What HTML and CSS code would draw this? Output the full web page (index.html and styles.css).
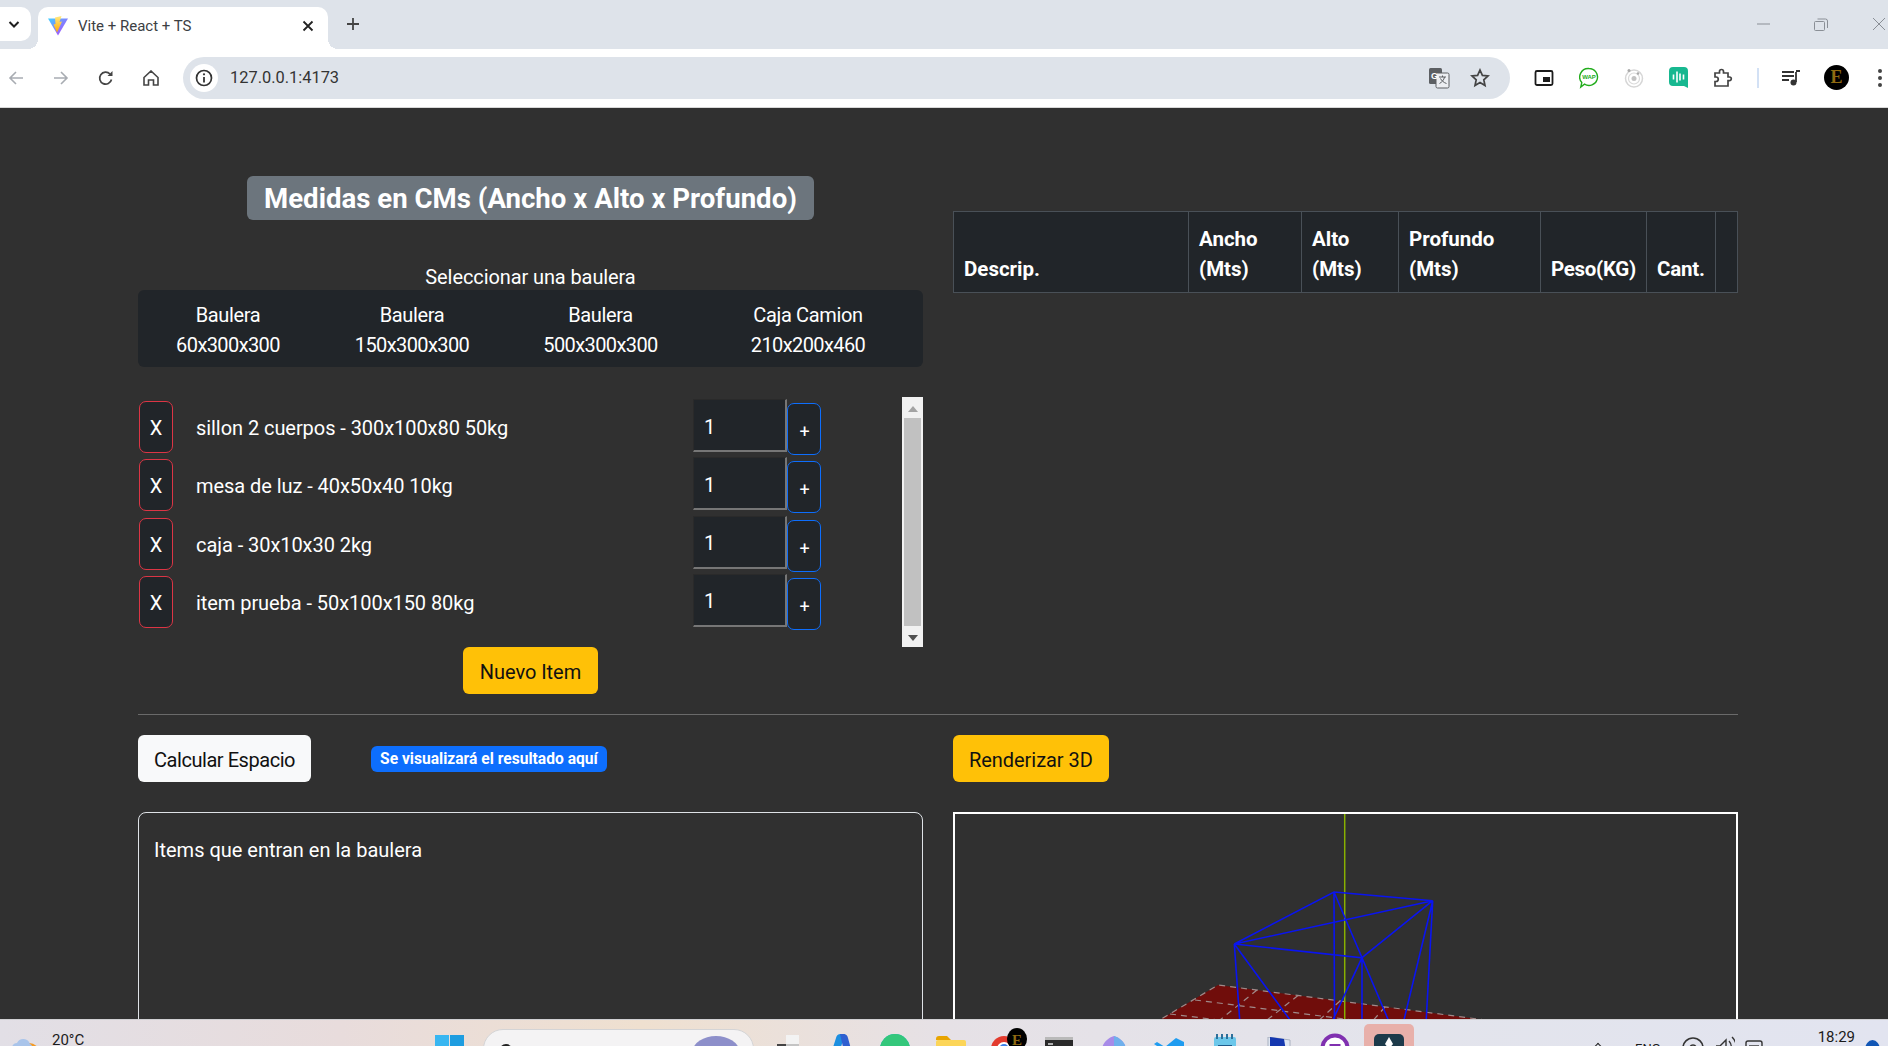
FILE: index.html
```html
<!DOCTYPE html>
<html lang="es">
<head>
  <meta charset="UTF-8">
  <title>Vite + React + TS</title>
  <link rel="stylesheet" href="styles.css">
</head>
<body>
  <div class="tabstrip">
    <div class="tab-menu">
      <svg width="14" height="14" viewBox="0 0 14 14"><path d="M2.500 5l4.500 4.500L11.500 5" fill="none" stroke="#1f1f1f" stroke-width="2"/></svg>
    </div>
    <div class="tab">
      <svg class="favicon" width="22" height="22" viewBox="0 0 22 22">
        <defs>
          <linearGradient id="viteBlue" x1="0" y1="0" x2="1" y2="1"><stop offset="0" stop-color="#41d1ff"/><stop offset="1" stop-color="#bd34fe"/></linearGradient>
          <linearGradient id="viteBolt" x1="0" y1="0" x2="0" y2="1"><stop offset="0" stop-color="#ffea83"/><stop offset="1" stop-color="#ffa800"/></linearGradient>
        </defs>
        <path d="M1 3.500L21 3.500 11 20.500z" fill="url(#viteBlue)"/>
        <path d="M14.500 1L8 2.500 8.500 9 6.500 9.500 10 17.500 15 6.500 12.500 7z" fill="url(#viteBolt)"/>
      </svg>
      <span class="tab-title">Vite + React + TS</span>
      <svg class="tab-close" width="12" height="12" viewBox="0 0 12 12"><path d="M1.500 1.500l9 9M10.500 1.500l-9 9" stroke="#222" stroke-width="1.800"/></svg>
    </div>
    <svg class="new-tab" width="14" height="14" viewBox="0 0 14 14"><path d="M7 1v12M1 7h12" stroke="#444" stroke-width="1.800"/></svg>
    <div class="window-controls">
      <svg width="14" height="14" viewBox="0 0 14 14"><path d="M1 7h13" stroke="#8a8f96" stroke-width="1"/></svg>
      <svg width="14" height="14" viewBox="0 0 14 14"><path d="M1.500 4.500h8a1 1 0 0 1 1 1v7a1 1 0 0 1-1 1h-8a1 1 0 0 1-1-1v-7a1 1 0 0 1 1-1zM3.500 2h8a2 2 0 0 1 2 2v7" fill="none" stroke="#8a8f96"/></svg>
      <svg width="14" height="14" viewBox="0 0 14 14"><path d="M1 1l12 12M13 1L1 13" stroke="#8a8f96"/></svg>
    </div>
  </div>

  <div class="toolbar">
    <div class="nav-icons">
      <svg width="16" height="16" viewBox="0 0 16 16"><path d="M15 8H2M8 2L2 8l6 6" fill="none" stroke="#a8acb2" stroke-width="1.600"/></svg>
      <svg width="16" height="16" viewBox="0 0 16 16"><path d="M1 8h13M8 2l6 6-6 6" fill="none" stroke="#a8acb2" stroke-width="1.600"/></svg>
      <svg width="16" height="16" viewBox="0 0 16 16"><path d="M13.500 9.500A6 6 0 1 1 12 4" fill="none" stroke="#444" stroke-width="1.700"/><path d="M14.500 1v5h-5z" fill="#444"/></svg>
      <svg width="16" height="16" viewBox="0 0 16 16"><path d="M1 7.500L8 1l7 6.500V15h-4.500v-5h-5v5H1z" fill="none" stroke="#444" stroke-width="1.600"/></svg>
    </div>
    <div class="omnibox">
      <span class="info-chip">
        <svg width="18" height="18" viewBox="0 0 18 18"><circle cx="9" cy="9" r="7.500" fill="none" stroke="#333" stroke-width="1.700"/><path d="M9 8v5.500" stroke="#333" stroke-width="1.800"/><circle cx="9" cy="5.300" r="1.100" fill="#333"/></svg>
      </span>
      <span class="url">127.0.0.1:4173</span>
      <svg class="omni-translate" width="22" height="22" viewBox="0 0 22 22">
        <rect x="1" y="1" width="13" height="16" rx="1.500" fill="#5c5f63"/>
        <rect x="8" y="6" width="13" height="15" rx="1.500" fill="#eceef2" stroke="#5c5f63"/>
        <text x="3" y="12" class="translate-g">G</text>
        <path d="M11 10h7M14.500 8.500V10M16.500 10c-.5 3-2.500 5-5 6.500M12.500 11.500c1 2 3 4 6 5" fill="none" stroke="#5c5f63"/>
      </svg>
      <svg class="omni-star" width="20" height="20" viewBox="0 0 20 20"><path d="M10 2l2.400 5.400 5.600.6-4.200 3.800 1.200 5.700L10 14.600 5 17.500l1.200-5.700L2 8l5.600-.6z" fill="none" stroke="#444" stroke-width="1.700"/></svg>
    </div>
    <div class="ext-icons">
      <svg width="20" height="18" viewBox="0 0 20 18"><rect x="1.500" y="2" width="17" height="14" rx="1.500" fill="none" stroke="#1c1c1c" stroke-width="1.800"/><rect x="9" y="8" width="7" height="5" fill="#1c1c1c"/></svg>
      <svg width="20" height="22" viewBox="0 0 20 22"><path d="M10 1.500a8.500 8.500 0 1 1-4.500 15.700L1.800 20l1-4.500A8.500 8.500 0 0 1 10 1.500z" fill="#fff" stroke="#22ac1c" stroke-width="1.400"/><text x="10" y="12" class="wap-text">WAP</text></svg>
      <svg width="20" height="20" viewBox="0 0 20 20"><circle cx="10" cy="10.500" r="8.500" fill="none" stroke="#d6d6d6" stroke-width="1.500"/><circle cx="10" cy="10.500" r="5.500" fill="none" stroke="#dadada" stroke-width="1.200"/><circle cx="10" cy="10.500" r="2.500" fill="#c2c2c2"/><circle cx="5" cy="2.500" r="1.500" fill="#a9a9a9"/><circle cx="14" cy="5.500" r="1.300" fill="#a9a9a9"/></svg>
      <svg width="19" height="21" viewBox="0 0 19 21"><path d="M4 0h11a4 4 0 0 1 4 4v17l-4-2H4a4 4 0 0 1-4-4V4a4 4 0 0 1 4-4z" fill="#17b890"/><path d="M4.500 7.500v5M8 4.500v11M11 6.500v7M14.500 7.500v5" stroke="#fff" stroke-width="1.600"/></svg>
      <svg width="20" height="20" viewBox="0 0 20 20"><path d="M2 5h4.500V3.500a2 2 0 0 1 4 0V5H15v4h1.500a1.800 1.800 0 0 1 0 3.600H15V18H2v-4.500h1a2.200 2.200 0 0 0 0-4.500H2z" fill="none" stroke="#444" stroke-width="1.700"/></svg>
      <span class="ext-divider"></span>
      <svg class="icon-music" width="20" height="18" viewBox="0 0 20 18"><path d="M1 3h12M1 7h12M1 11h7" stroke="#333" stroke-width="1.800"/><path d="M15 3v10" stroke="#333" stroke-width="1.800"/><path d="M15 2h4" stroke="#333" stroke-width="2"/><circle cx="12.500" cy="13.500" r="3" fill="#333"/></svg>
      <span class="avatar">E</span>
      <svg class="icon-dots" width="6" height="20" viewBox="0 0 6 20"><circle cx="3" cy="3" r="2" fill="#444"/><circle cx="3" cy="10" r="2" fill="#444"/><circle cx="3" cy="17" r="2" fill="#444"/></svg>
    </div>
  </div>

  <main class="page">
    <div class="top-row">
      <section class="left-col">
        <div class="title-wrap"><h1 class="title-badge">Medidas en CMs (Ancho x Alto x Profundo)</h1></div>
        <p class="select-label">Seleccionar una baulera</p>
        <div class="baulera-table">
          <div class="baulera">Baulera<br><span class="dim">60x300x300</span></div>
          <div class="baulera">Baulera<br><span class="dim">150x300x300</span></div>
          <div class="baulera">Baulera<br><span class="dim">500x300x300</span></div>
          <div class="baulera">Caja Camion<br><span class="dim">210x200x460</span></div>
        </div>

        <div class="items-box">
          <div class="items-list">
            <div class="item-row">
              <button class="btn-remove">X</button>
              <span class="item-label">sillon 2 cuerpos - 300x100x80 50kg</span>
              <input class="qty" type="text" value="1">
              <button class="btn-add">+</button>
            </div>
            <div class="item-row">
              <button class="btn-remove">X</button>
              <span class="item-label">mesa de luz - 40x50x40 10kg</span>
              <input class="qty" type="text" value="1">
              <button class="btn-add">+</button>
            </div>
            <div class="item-row">
              <button class="btn-remove">X</button>
              <span class="item-label">caja - 30x10x30 2kg</span>
              <input class="qty" type="text" value="1">
              <button class="btn-add">+</button>
            </div>
            <div class="item-row">
              <button class="btn-remove">X</button>
              <span class="item-label">item prueba - 50x100x150 80kg</span>
              <input class="qty" type="text" value="1">
              <button class="btn-add">+</button>
            </div>
          </div>
          <div class="scrollbar">
            <span class="arrow-up"></span>
            <span class="thumb"></span>
            <span class="arrow-down"></span>
          </div>
        </div>
        <div class="new-item"><button class="btn-yellow btn-new">Nuevo Item</button></div>
      </section>

      <section class="right-col">
        <table class="items-table">
          <colgroup>
            <col class="c1"><col class="c2"><col class="c3"><col class="c4"><col class="c5"><col class="c6"><col class="c7">
          </colgroup>
          <thead>
            <tr>
              <th>Descrip.</th>
              <th>Ancho (Mts)</th>
              <th>Alto (Mts)</th>
              <th>Profundo (Mts)</th>
              <th class="th-peso">Peso(KG)</th>
              <th class="th-cant">Cant.</th>
              <th></th>
            </tr>
          </thead>
        </table>
      </section>
    </div>

    <hr class="divider">

    <div class="bottom-row">
      <section class="left-col">
        <div class="actions">
          <button class="btn-light">Calcular Espacio</button>
          <span class="result-badge">Se visualizará el resultado aquí</span>
        </div>
        <div class="result-box">Items que entran en la baulera</div>
      </section>
      <section class="right-col">
        <div class="actions">
          <button class="btn-yellow">Renderizar 3D</button>
        </div>
        <div class="canvas-box">
          <svg class="scene" width="781" height="240" viewBox="955 814 781 240">
            <path class="floor" d="M1153 1024L1218 985 1516 1024z"/>
            <path class="grid" d="M1153 1024L1218 985 1516 1024M1195 1000L1400 1026M1170 1014L1300 1030M1257 990L1215 1024M1298 995.500L1262 1024M1340 1001L1315 1024M1385 1007L1370 1024"/>
            <path class="axis" d="M1344.700 814V1024"/>
            <path class="wire" d="M1334 892L1432.700 900.700 1234.300 944 1334 892 1362 957.700 1234.300 944M1432.700 900.700L1362 957.700M1234.300 944L1240 1024M1234.300 944L1293 1024M1334 892L1334.500 1024M1362 957.700V1024M1362 957.700L1331 1024M1362 957.700L1390 1024M1432.700 900.700L1426 1024M1432.700 900.700L1403 1024"/>
          </svg>
        </div>
      </section>
    </div>
  </main>

  <footer class="taskbar">
    <div class="weather">
      <svg width="30" height="27" viewBox="0 0 30 27"><circle cx="18" cy="21" r="11" fill="#f59a23"/><path d="M3 19a5 5 0 0 1 3-9 7 7 0 0 1 13 1 4.500 4.500 0 0 1 0 8z" fill="#a9c4ea"/></svg>
      <span class="temp">20°C</span>
    </div>
    <div class="task-center">
      <svg class="icon-win" width="29" height="27" viewBox="0 0 29 27"><rect width="14" height="14" fill="#38b6f1"/><rect x="15" width="14" height="14" fill="#1e9de0"/><rect y="15" width="14" height="14" fill="#1e9de0"/><rect x="15" y="15" width="14" height="14" fill="#0a84d0"/></svg>
      <div class="search-box">
        <svg width="18" height="18" viewBox="0 0 18 18"><circle cx="8" cy="8" r="6" fill="none" stroke="#222" stroke-width="1.800"/></svg>
        <span class="search-text">Search</span>
        <span class="search-art"></span>
      </div>
      <svg class="icon-widgets" width="22" height="22" viewBox="0 0 22 22"><rect x="9" width="13" height="13" fill="#f3f3f3"/><rect y="9" width="13" height="13" fill="#444"/><rect x="9" y="9" width="13" height="13" fill="#c4c4c4"/></svg>
      <svg class="icon-copilot" width="30" height="26" viewBox="0 0 30 26"><path d="M3 26L10 4a5 5 0 0 1 5-4h4l-8 26z" fill="#1c8fe0"/><path d="M14 0h3a5 5 0 0 1 5 4l6 22h-8z" fill="#2f5fd0"/><circle cx="23" cy="24" r="6" fill="#b05ad8"/></svg>
      <svg class="icon-edge" width="30" height="26" viewBox="0 0 30 26"><circle cx="15" cy="15" r="15" fill="#1fb4c9"/><path d="M0 15a15 15 0 0 1 30 0z" fill="#34c77b"/><circle cx="13" cy="21" r="7" fill="#1070c8"/></svg>
      <svg class="icon-folder" width="30" height="22" viewBox="0 0 30 22"><path d="M0 3a3 3 0 0 1 3-3h8l4 4H0z" fill="#e8a400"/><rect y="4" width="30" height="20" rx="2" fill="#fcd558"/></svg>
      <svg class="icon-chrome" width="36" height="30" viewBox="0 0 36 30"><circle cx="13" cy="21" r="13" fill="#e33b2e"/><path d="M13 21L0 21a13 13 0 0 0 13 13z" fill="#33a852"/><circle cx="13" cy="21" r="6" fill="#3d7fe8" stroke="#fff" stroke-width="2"/><ellipse cx="26" cy="11" rx="10" ry="11" fill="#000"/><text x="26" y="17" class="chrome-e">E</text></svg>
      <svg class="icon-term" width="28" height="20" viewBox="0 0 28 20"><rect width="28" height="20" fill="#2a2a2a"/><rect width="28" height="3" fill="#b9b9b9"/><path d="M3 7h5M3 10h3M10 11h8" stroke="#ddd" stroke-width="1.500"/></svg>
      <svg class="icon-m365" width="28" height="24" viewBox="0 0 28 24"><path d="M14 0C7 2 2 8 2 14v10h24V14C26 8 21 2 14 0z" fill="#a78be8"/><path d="M14 0c7 2 12 8 12 14v10H14z" fill="#6fb0ec"/></svg>
      <svg class="icon-vscode" width="30" height="24" viewBox="0 0 30 24"><path d="M22 0l8 4v20h-8V8L9 20l-7-4 7-4-9-6 3-2 8 5z" fill="#1f9cf0"/></svg>
      <svg class="icon-note" width="22" height="26" viewBox="0 0 22 26"><rect y="3" width="22" height="23" rx="2" fill="#6cc7ea"/><path d="M3 0v5M8 0v5M13 0v5M18 0v5" stroke="#2d6f9a" stroke-width="2"/><rect x="4" y="11" width="14" height="3" fill="#1e5a8a"/></svg>
      <svg class="icon-paper" width="26" height="20" viewBox="0 0 26 20"><path d="M2 0l22 3v17H2z" fill="#dfe6f3" stroke="#a9b1c0"/><path d="M4 0l14 2 3 18H4z" fill="#1538b0"/></svg>
      <svg class="icon-purple" width="30" height="24" viewBox="0 0 30 24"><circle cx="15" cy="15" r="12.500" fill="#fff" stroke="#8030b0" stroke-width="4"/><rect x="9.500" y="11" width="11" height="8" fill="#8030b0"/></svg>
      <div class="task-active">
        <svg width="30" height="22" viewBox="0 0 30 22"><rect width="30" height="28" rx="5" fill="#1d3a4a"/><path d="M15 3l4 7-4 5-4-5z" fill="#fff"/><path d="M18 12l5 8h-8z" fill="#3fc9a5"/></svg>
      </div>
    </div>
    <div class="tray">
      <span class="tray-caret"></span>
      <span class="tray-lang">ENG</span>
      <svg width="24" height="24" viewBox="0 0 24 24"><circle cx="12" cy="14" r="10" fill="none" stroke="#333" stroke-width="1.600"/><circle cx="12" cy="14" r="3" fill="none" stroke="#333" stroke-width="1.400"/></svg>
      <svg width="20" height="24" viewBox="0 0 20 24"><path d="M1 12h4l6-6v18" fill="none" stroke="#333" stroke-width="1.400"/><path d="M14 7a9 9 0 0 1 0 12M17 3a14 14 0 0 1 0 20" fill="none" stroke="#333" stroke-width="1.300"/></svg>
      <svg width="18" height="24" viewBox="0 0 18 24"><rect x="1" y="7" width="16" height="16" rx="2" fill="none" stroke="#333" stroke-width="1.400"/><path d="M4 12h10" stroke="#333" stroke-width="1.400"/></svg>
      <span class="clock">18:29</span>
      <span class="tray-dot"></span>
    </div>
  </footer>
</body>
</html>
```

FILE: styles.css
```css
* {
  box-sizing: border-box;
}
html, body {
  margin: 0;
  height: 1046px;
  overflow: hidden;
}
body {
  display: flex;
  flex-direction: column;
  font-family: Roboto, "Open Sans", Arial, sans-serif;
  font-size: 20px;
  line-height: 30px;
  color: #fff;
  background-color: #303030;
}
svg {
  display: block;
  flex: none;
}

/* browser tabs */
.tabstrip {
  flex: none;
  display: flex;
  align-items: flex-start;
  height: 49px;
  background-color: #dee3ea;
}
.tab-menu {
  width: 31px;
  height: 34px;
  margin-top: 7px;
  padding: 10px 7px;
  background-color: #fff;
  border-radius: 0 10px 10px 0;
}
.tab {
  position: relative;
  display: flex;
  align-items: center;
  width: 290px;
  height: 42px;
  margin: 7px 0 0 7px;
  padding: 0 14px 4px 9px;
  background-color: #fff;
  border-radius: 10px 10px 0 0;
}
.tab::after {
  content: "";
  position: absolute;
  right: -10px;
  bottom: 0;
  width: 10px;
  height: 10px;
  background: radial-gradient(circle at 100% 0, transparent 10px, #fff 10px);
}
.tab::before {
  content: "";
  position: absolute;
  left: -10px;
  bottom: 0;
  width: 10px;
  height: 10px;
  background: radial-gradient(circle at 0 0, transparent 10px, #fff 10px);
}
.favicon {
  margin-right: 9px;
}
.tab-title {
  flex: 1;
  font-size: 15px;
  line-height: 20px;
  color: #3c4043;
}
.new-tab {
  margin: 17px 0 0 18px;
}
.window-controls {
  display: flex;
  gap: 44px;
  margin: 17px 2px 0 auto;
}

/* browser toolbar */
.toolbar {
  flex: none;
  display: flex;
  align-items: center;
  height: 59px;
  padding: 0 5px 1px 8px;
  background-color: #fff;
  border-bottom: 1px solid #d8d8d8;
}
.nav-icons {
  display: flex;
  gap: 29px;
}
.omnibox {
  display: flex;
  align-items: center;
  width: 1327px;
  height: 42px;
  margin-left: 24px;
  padding: 0 20px 0 7px;
  background-color: #dee3ea;
  border-radius: 21px;
}
.info-chip {
  display: flex;
  align-items: center;
  justify-content: center;
  width: 28px;
  height: 28px;
  background-color: #fff;
  border-radius: 50%;
}
.url {
  flex: 1;
  margin-left: 12px;
  padding-top: 1px;
  font-size: 16.400px;
  color: #333;
}
.omni-star {
  margin-left: 20px;
}
.translate-g {
  font-family: "Liberation Sans", Arial, sans-serif;
  font-size: 9px;
  font-weight: bold;
  fill: #fff;
}
.wap-text {
  font-family: "Liberation Sans", Arial, sans-serif;
  font-size: 6px;
  font-weight: bold;
  text-anchor: middle;
  fill: #22ac1c;
}
.ext-icons {
  display: flex;
  align-items: center;
  gap: 25px;
  margin-left: 24px;
}
.ext-divider {
  width: 2px;
  height: 20px;
  margin-left: -1px;
  background-color: #d3e1f5;
}
.icon-music {
  margin-left: -3px;
}
.avatar {
  width: 25px;
  height: 25px;
  margin-left: -2px;
  font-family: "Liberation Serif", serif;
  font-size: 18px;
  font-weight: bold;
  line-height: 25px;
  text-align: center;
  color: #8f6a12;
  background-color: #000;
  border-radius: 50%;
}
.icon-dots {
  margin-left: 3px;
}

/* page */
.page {
  flex: 1;
  min-height: 0;
  overflow: hidden;
  padding: 0 150px 0 138px;
  background-color: #303030;
}
.top-row, .bottom-row {
  display: grid;
  grid-template-columns: 785px 785px;
  gap: 30px;
}
.title-wrap {
  margin-top: 68px;
  text-align: center;
}
.title-badge {
  display: inline-block;
  margin: 0;
  padding: 1px 17px 0;
  height: 44px;
  font-size: 27.600px;
  font-weight: 700;
  line-height: 44px;
  background-color: #6c757d;
  border-radius: 6px;
}
.select-label {
  margin: 41px 0 0;
  height: 29px;
  padding-top: 1px;
  text-align: center;
  letter-spacing: -.1px;
}
.baulera-table {
  display: grid;
  grid-template-columns: 180px 188px 189px 226px;
  height: 77px;
  padding-top: 10px;
  text-align: center;
  letter-spacing: -.34px;
  background-color: #212529;
  border-radius: 6px;
}
.dim {
  letter-spacing: -.6px;
}
.items-box {
  display: flex;
  height: 250px;
  margin-top: 30px;
}
.items-list {
  flex: 1;
  display: flex;
  flex-direction: column;
  gap: 6.330px;
  padding: 4px 81px 0 1px;
}
.item-row {
  display: flex;
  align-items: flex-start;
  height: 52px;
}
.btn-remove {
  width: 34px;
  height: 52px;
  padding: 2px 0 0;
  font: inherit;
  color: #fff;
  background-color: #212529;
  border: 1px solid #dc3545;
  border-radius: 7px;
}
.item-label {
  flex: 1;
  margin-left: 23px;
  line-height: 55px;
  letter-spacing: -.06px;
}
.qty {
  width: 94px;
  height: 53px;
  margin-top: -2px;
  padding: 3px 10px 0;
  font: inherit;
  color: #fff;
  background-color: #212529;
  border-style: solid;
  border-width: 1px 2px 2px 1px;
  border-color: #2a2a2a #767676 #767676 #2a2a2a;
  outline: none;
}
.btn-add {
  width: 34px;
  height: 52px;
  margin-top: 2px;
  padding: 6px 0 0 1px;
  font: inherit;
  font-size: 18px;
  color: #fff;
  background-color: #212529;
  border: 1px solid #0d6efd;
  border-radius: 7px;
}
.scrollbar {
  display: flex;
  flex-direction: column;
  align-items: center;
  width: 21px;
  padding: 9px 0 6px;
  background-color: #f1f1f1;
}
.thumb {
  flex: 1;
  width: 17px;
  margin: 6px 0 9px;
  background-color: #c1c1c1;
}
.arrow-up {
  border: 5px solid transparent;
  border-top: 0;
  border-bottom: 6px solid #a3a3a3;
}
.arrow-down {
  border: 5px solid transparent;
  border-bottom: 0;
  border-top: 6px solid #505050;
}
.new-item {
  text-align: center;
}
.btn-yellow, .btn-light {
  height: 47px;
  padding: 2px 16px 0;
  font: inherit;
  border: none;
  border-radius: 6px;
}
.btn-yellow {
  color: #111;
  background-color: #ffc107;
  letter-spacing: -.05px;
}
.btn-new {
  padding: 2px 17px 0;
}
.btn-light {
  color: #111;
  background-color: #f8f9fa;
  letter-spacing: -.45px;
}
.items-table {
  width: 784px;
  margin-top: 103px;
  table-layout: fixed;
  border-collapse: collapse;
  background-color: #212529;
}
.items-table th {
  height: 81px;
  padding: 8px 10px;
  font-size: 20.500px;
  font-weight: 700;
  text-align: left;
  vertical-align: bottom;
  border: 1px solid #495057;
}
.items-table .th-peso {
  letter-spacing: -.3px;
}
.items-table .th-cant {
  letter-spacing: -.2px;
}
.c1 { width: 235px; }
.c2 { width: 113px; }
.c3 { width: 97px; }
.c4 { width: 142px; }
.c5 { width: 106px; }
.c6 { width: 69px; }
.c7 { width: 22px; }
.divider {
  height: 1px;
  margin: 20px 0;
  background-color: #6a6a6a;
  border: none;
}
.actions {
  display: flex;
  align-items: center;
  gap: 60px;
}
.result-badge {
  height: 26px;
  padding: 0 9px;
  font-size: 15.600px;
  font-weight: 700;
  line-height: 26px;
  background-color: #0d6efd;
  border-radius: 6px;
}
.result-box {
  height: 300px;
  margin-top: 30px;
  padding: 22px 15px;
  border: 1px solid #dee2e6;
  border-radius: 8px;
}
.canvas-box {
  height: 300px;
  margin-top: 30px;
  border: 2px solid #fff;
  overflow: hidden;
}
.floor {
  fill: #700d0b;
}
.grid {
  fill: none;
  stroke: #a08a8a;
  stroke-width: 1.200;
  stroke-dasharray: 6 5;
}
.axis {
  stroke: #88b000;
  stroke-width: 1.500;
}
.wire {
  fill: none;
  stroke: #0a14f0;
  stroke-width: 1.600;
}

/* windows taskbar */
.taskbar {
  flex: none;
  position: relative;
  display: flex;
  height: 27px;
  overflow: hidden;
  color: #1b1b1b;
  background: linear-gradient(90deg, #e2dfe6 0, #e8dcdc 18%, #efe0d0 34%, #e6e1e6 50%, #e3e4ec 75%, #e2e4f0 100%);
  border-top: 1px solid #cfcfd2;
}
.weather {
  display: flex;
  width: 435px;
  padding: 13px 0 0 11px;
}
.temp {
  margin: -3px 0 0 11px;
  font-size: 15px;
  line-height: 20px;
}
.task-center {
  display: flex;
  align-items: flex-start;
}
.icon-win { margin-top: 15px; }
.search-box {
  display: flex;
  width: 271px;
  height: 40px;
  margin: 9px 0 0 19px;
  padding: 13px 0 0 14px;
  background-color: #f4f3f4;
  border: 1px solid #d4d4d6;
  border-radius: 20px;
}
.search-text {
  flex: 1;
  margin: 3px 0 0 12px;
  font-size: 15px;
  line-height: 18px;
  color: #444;
}
.search-art {
  width: 46px;
  height: 30px;
  margin: -7px 14px 0 0;
  background-color: #8d8fca;
  border-radius: 50% 50% 0 0;
}
.icon-widgets { margin: 15px 0 0 23px; }
.icon-copilot { margin: 14px 0 0 27px; }
.icon-edge { margin: 14px 0 0 24px; }
.icon-folder { margin: 16px 0 0 26px; }
.icon-chrome { margin: 8px 0 0 25px; }
.icon-term { margin: 17px 0 0 18px; }
.icon-m365 { margin: 16px 0 0 27px; }
.icon-vscode { margin: 18px 0 0 26px; }
.icon-note { margin: 14px 0 0 30px; }
.icon-paper { margin: 17px 0 0 30px; }
.icon-purple { margin: 13px 0 0 28px; }
.task-active {
  width: 50px;
  height: 30px;
  margin: 4px 0 0 14px;
  padding: 10px 10px 0;
  background-color: #e8b0aa;
  border-radius: 5px;
}
.chrome-e {
  font-family: "Liberation Serif", serif;
  font-size: 15px;
  font-weight: bold;
  text-anchor: middle;
  fill: #8f6a12;
}
.tray {
  display: flex;
  align-items: flex-start;
  gap: 10px;
  margin-left: auto;
  padding-right: 8px;
}
.tray svg { margin-top: 14px; }
.tray-caret {
  width: 6px;
  height: 6px;
  margin: 24px 24px 0 0;
  border-left: 1.500px solid #222;
  border-top: 1.500px solid #222;
  transform: rotate(45deg);
}
.tray-lang {
  margin: 20px 10px 0 0;
  font-size: 13px;
  line-height: 18px;
}
.clock {
  margin: 7px 0 0 45px;
  font-size: 15px;
  line-height: 20px;
}
.tray-dot {
  width: 15px;
  height: 20px;
  margin: 20px 0 0 0;
  background-color: #1156b5;
  border-radius: 50%;
}
```
